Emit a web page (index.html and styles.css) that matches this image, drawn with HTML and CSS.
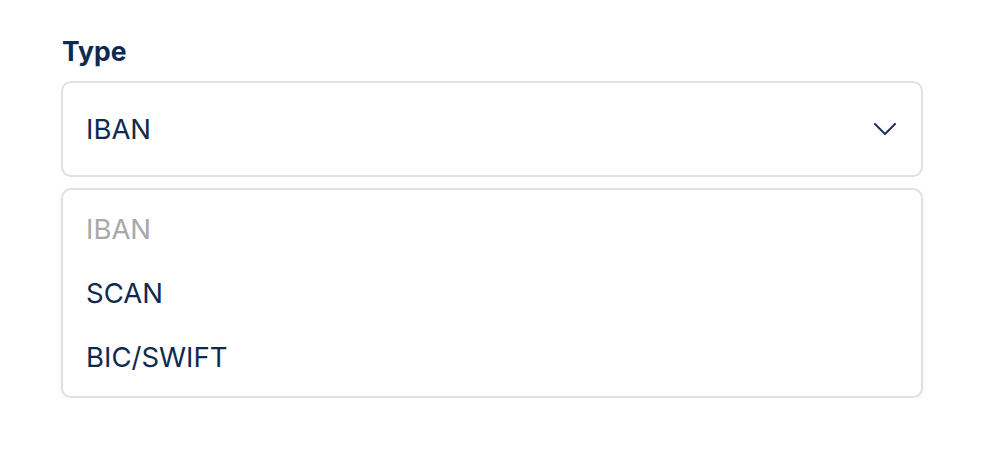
FILE: index.html
```html
<!DOCTYPE html>
<html lang="en">
<head>
<meta charset="utf-8">
<title>Type select</title>
<link rel="stylesheet" href="styles.css">
</head>
<body>
<div class="field">
  <div class="label">Type</div>
  <div class="select">
    <span class="value">IBAN</span>
    <svg class="chevron" width="22" height="12" viewBox="0 0 22 12" aria-hidden="true">
      <polyline points="1,1 11,11 21,1" fill="none" stroke="#1b355a" stroke-width="2" stroke-linecap="round" stroke-linejoin="round"/>
    </svg>
  </div>
  <ul class="menu">
    <li class="option disabled">IBAN</li>
    <li class="option">SCAN</li>
    <li class="option">BIC/SWIFT</li>
  </ul>
</div>
</body>
</html>
```

FILE: styles.css
```css
* { box-sizing: border-box; }
html, body {
  margin: 0;
  padding: 0;
  background: #ffffff;
}
body {
  font-family: "Inter", "Noto Sans", sans-serif;
  color: #0e2a50;
}
.field {
  width: 862px;
  margin: 35px 0 0 61px;
}
.label {
  height: 32px;
  line-height: 32px;
  font-size: 26.5px;
  font-weight: 700;
  margin-bottom: 14px;
  padding-left: 1px;
}
.select {
  height: 96px;
  border: 2px solid #dde1e5;
  border-radius: 10px;
  display: flex;
  align-items: center;
  justify-content: space-between;
  padding: 0 25px 0 23px;
}
.value {
  font-size: 27.5px;
  line-height: 32px;
}
.chevron {
  display: block;
}
.menu {
  list-style: none;
  margin: 11px 0 0 0;
  padding: 7px 0 11px;
  height: 210px;
  border: 2px solid #dde1e5;
  border-radius: 10px;
  box-shadow: 0 2px 4px rgba(0, 0, 0, 0.05);
}
.option {
  height: 64px;
  display: flex;
  align-items: center;
  padding-left: 23px;
  font-size: 27.5px;
}
.option.disabled {
  color: #a8a8a8;
}
```
